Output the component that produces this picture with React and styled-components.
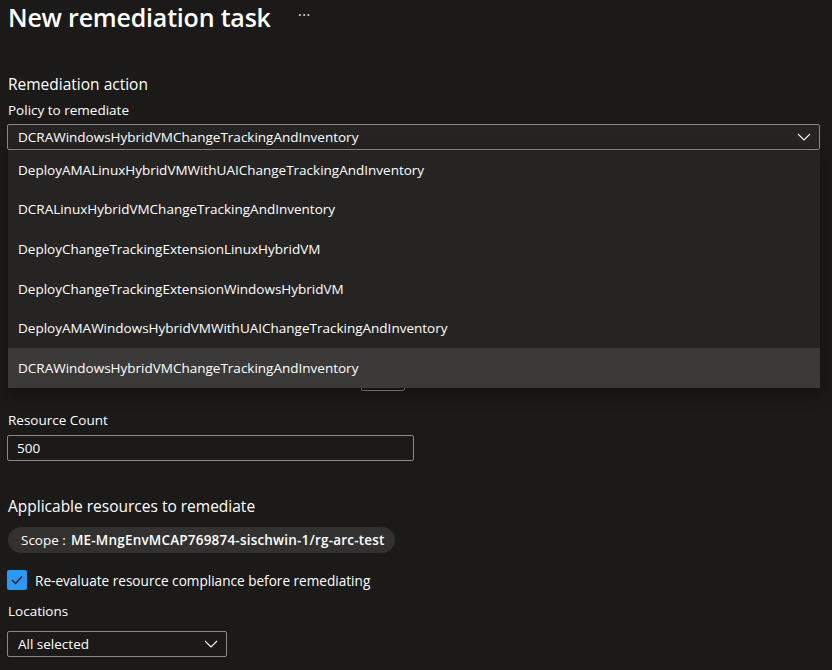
import styled, { createGlobalStyle } from 'styled-components'

const GlobalStyle = createGlobalStyle`
  html, body {
    margin: 0;
    padding: 0;
    background: #1b1a19;
  }
  body {
    font-family: 'Segoe UI', 'Open Sans', sans-serif;
    color: #ffffff;
  }
`

const Page = styled.div`
  width: 832px;
  height: 670px;
  overflow: hidden;
  padding: 0 12px 0 7px;
  box-sizing: border-box;
  display: flex;
  flex-direction: column;
`

const Header = styled.div`
  display: flex;
  align-items: center;
  gap: 27px;
  height: 34px;
  padding-left: 1px;
`

const Title = styled.h1`
  margin: 0;
  font-size: 25px;
  font-weight: 600;
  letter-spacing: -0.2px;
  color: #ffffff;
  line-height: 34px;
`

const MoreButton = styled.span`
  font-size: 16px;
  color: #d2d0ce;
  line-height: 1;
  margin-top: -4px;
`

const SectionTitle = styled.h2`
  margin: 0;
  padding-left: 1px;
  font-size: 15.5px;
  font-weight: 400;
  color: #ffffff;
  line-height: 22px;
  margin-top: ${(p) => p.$top || 0}px;
`

const Label = styled.div`
  font-size: 13.5px;
  color: #ffffff;
  line-height: 20px;
  padding-left: 1px;
  margin-top: ${(p) => p.$top || 0}px;
  margin-bottom: ${(p) => p.$bottom ?? 4}px;
`

const SelectWrap = styled.div`
  position: relative;
  width: ${(p) => p.$width};
`

const SelectBox = styled.div`
  height: 26px;
  box-sizing: border-box;
  border: 1px solid #8a8886;
  border-radius: 2px;
  background: ${(p) => p.$bg || '#1b1a19'};
  display: flex;
  align-items: center;
  justify-content: space-between;
  padding: 0 8px 0 10px;
  font-size: 13.5px;
  color: #ffffff;
`

const Chevron = () => (
  <svg width="14" height="8" viewBox="0 0 14 8" fill="none">
    <path d="M1 1l6 6 6-6" stroke="#ffffff" strokeWidth="1.1" />
  </svg>
)

const DropdownList = styled.ul`
  position: absolute;
  top: 26px;
  left: 1px;
  right: 0;
  margin: 0;
  padding: 0;
  list-style: none;
  background: #252423;
  box-shadow: 0 6px 14px rgba(0, 0, 0, 0.35);
  z-index: 5;
`

const Option = styled.li`
  height: 39.6px;
  display: flex;
  align-items: center;
  padding-left: 10px;
  font-size: 13.5px;
  color: #ffffff;
  background: ${(p) => (p.$selected ? '#3b3a39' : 'transparent')};
`

const HiddenRow = styled.div`
  height: 241px;
  display: flex;
  align-items: flex-end;
  padding-left: 354px;
`

const PeekBox = styled.div`
  width: 44px;
  height: 26px;
  box-sizing: border-box;
  border: 1px solid #8a8886;
  border-radius: 2px;
`

const TextInput = styled.div`
  width: 407px;
  height: 26px;
  box-sizing: border-box;
  border: 1px solid #8a8886;
  border-radius: 2px;
  display: flex;
  align-items: center;
  padding-left: 9px;
  font-size: 13.5px;
  color: #ffffff;
`

const ScopePill = styled.div`
  align-self: flex-start;
  margin-top: 10px;
  margin-left: 1px;
  height: 26px;
  border-radius: 13px;
  background: #323130;
  display: flex;
  align-items: center;
  padding: 0 10px 0 13px;
  font-size: 13.5px;
  color: #ffffff;
  white-space: nowrap;
`

const Bold = styled.b`
  font-weight: 600;
  margin-left: 5px;
  letter-spacing: 0.2px;
`

const CheckRow = styled.label`
  display: flex;
  align-items: center;
  gap: 8px;
  margin-top: 17px;
  font-size: 13.6px;
  color: #ffffff;
`

const CheckBox = styled.span`
  width: 20px;
  height: 20px;
  border-radius: 2px;
  background: #2899f5;
  display: flex;
  align-items: center;
  justify-content: center;
`

const policies = [
  'DeployAMALinuxHybridVMWithUAIChangeTrackingAndInventory',
  'DCRALinuxHybridVMChangeTrackingAndInventory',
  'DeployChangeTrackingExtensionLinuxHybridVM',
  'DeployChangeTrackingExtensionWindowsHybridVM',
  'DeployAMAWindowsHybridVMWithUAIChangeTrackingAndInventory',
  'DCRAWindowsHybridVMChangeTrackingAndInventory',
]

export default function App() {
  const selected = policies[policies.length - 1]
  return (
    <>
      <GlobalStyle />
      <Page>
        <Header>
          <Title>New remediation task</Title>
          <MoreButton>···</MoreButton>
        </Header>

        <SectionTitle $top={39}>Remediation action</SectionTitle>
        <Label $top={5}>Policy to remediate</Label>
        <SelectWrap $width="813px">
          <SelectBox $bg="#252423">
            <span>{selected}</span>
            <Chevron />
          </SelectBox>
          <DropdownList>
            {policies.map((p) => (
              <Option key={p} $selected={p === selected}>
                {p}
              </Option>
            ))}
          </DropdownList>
          <HiddenRow>
            <PeekBox />
          </HiddenRow>
        </SelectWrap>

        <Label $top={19} $bottom={5}>Resource Count</Label>
        <TextInput>500</TextInput>

        <SectionTitle $top={34}>Applicable resources to remediate</SectionTitle>
        <ScopePill>
          Scope :<Bold>ME-MngEnvMCAP769874-sischwin-1/rg-arc-test</Bold>
        </ScopePill>

        <CheckRow>
          <CheckBox>
            <svg width="12" height="10" viewBox="0 0 12 10" fill="none">
              <path d="M1 5l3.5 3.5L11 1.5" stroke="#1b1a19" strokeWidth="1.3" />
            </svg>
          </CheckBox>
          Re-evaluate resource compliance before remediating
        </CheckRow>

        <Label $top={11} $bottom={10}>Locations</Label>
        <SelectWrap $width="220px">
          <SelectBox>
            <span>All selected</span>
            <Chevron />
          </SelectBox>
        </SelectWrap>
      </Page>
    </>
  )
}
